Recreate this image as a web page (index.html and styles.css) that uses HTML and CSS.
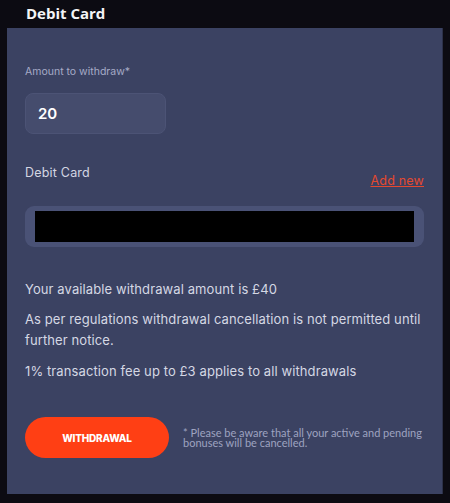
FILE: index.html
```html
<!DOCTYPE html>
<html lang="en">
<head>
<meta charset="utf-8">
<title>Debit Card</title>
<link rel="stylesheet" href="styles.css">
</head>
<body>
  <h1 class="title">Debit Card</h1>
  <section class="panel">
    <label class="field-label" for="amount">Amount to withdraw*</label>
    <div class="amount-box" id="amount">20</div>

    <div class="card-head">
      <span class="card-label">Debit Card</span>
      <a class="add-new" href="#">Add new</a>
    </div>
    <div class="card-select"><div class="card-mask"></div></div>

    <p class="info first">Your available withdrawal amount is £40</p>
    <p class="info">As per regulations withdrawal cancellation is not permitted until further notice.</p>
    <p class="info last">1% transaction fee up to £3 applies to all withdrawals</p>

    <div class="actions">
      <button class="withdraw">WITHDRAWAL</button>
      <p class="note">* Please be aware that all your active and pending bonuses will be cancelled.</p>
    </div>
  </section>
</body>
</html>
```
FILE: styles.css
```css
html, body {
  margin: 0;
  padding: 0;
  background: #0c0b12;
}

body {
  width: 450px;
  height: 503px;
  overflow: hidden;
  font-family: "Inter", "Noto Sans", sans-serif;
}

.title {
  margin: 0;
  padding: 2px 0 0 26px;
  height: 26px;
  font-family: "Open Sans", "Noto Sans", sans-serif;
  font-size: 15px;
  font-weight: 700;
  line-height: 22px;
  color: #f4f4f6;
}

.panel {
  margin: 0 7px 0 7px;
  height: 466px;
  box-sizing: border-box;
  background: #3b4262;
  padding: 37px 18px 0 18px;
  border-right: 1px solid #2c3149;
}

.field-label {
  display: block;
  font-size: 10.5px;
  line-height: 14px;
  color: #a6abc7;
}

.amount-box {
  margin-top: 14px;
  width: 141px;
  height: 41px;
  box-sizing: border-box;
  border-radius: 8px;
  background: #454c6d;
  border: 1px solid #4c5375;
  padding-left: 12px;
  display: flex;
  align-items: center;
  font-size: 15px;
  font-weight: 600;
  color: #ffffff;
}

.card-head {
  margin-top: 31px;
  display: flex;
  justify-content: space-between;
  align-items: flex-start;
}

.card-label {
  font-size: 12.5px;
  line-height: 16px;
  color: #d4d6e2;
  letter-spacing: 0.2px;
}

.add-new {
  margin-top: 8px;
  font-size: 12.5px;
  line-height: 16px;
  color: #e4492f;
  text-decoration: underline;
  letter-spacing: 0.2px;
}

.card-select {
  margin-top: 17px;
  height: 41px;
  box-sizing: border-box;
  border-radius: 9px;
  background: #4a5276;
  padding: 5px 10px;
}

.card-mask {
  height: 31px;
  background: #000000;
}

.info {
  margin: 9px -8px 0 0;
  font-size: 13px;
  line-height: 21px;
  color: #d5d8e4;
  letter-spacing: 0.1px;
}

.info.first {
  margin-top: 32px;
}

.info.last {
  margin-top: 10px;
}

.actions {
  margin-top: 35px;
  display: flex;
  align-items: center;
  gap: 14px;
}

.withdraw {
  flex: none;
  width: 144px;
  height: 41px;
  border: none;
  border-radius: 21px;
  background: #ff3f14;
  color: #ffffff;
  font-family: "Inter", "Noto Sans", sans-serif;
  font-size: 10px;
  font-weight: 800;
  letter-spacing: -0.2px;
  padding: 0;
}

.note {
  margin: 0 -6px 0 0;
  font-family: "Lato", "Noto Sans", sans-serif;
  font-size: 11px;
  line-height: 10px;
  color: #9ea3c0;
}
```
